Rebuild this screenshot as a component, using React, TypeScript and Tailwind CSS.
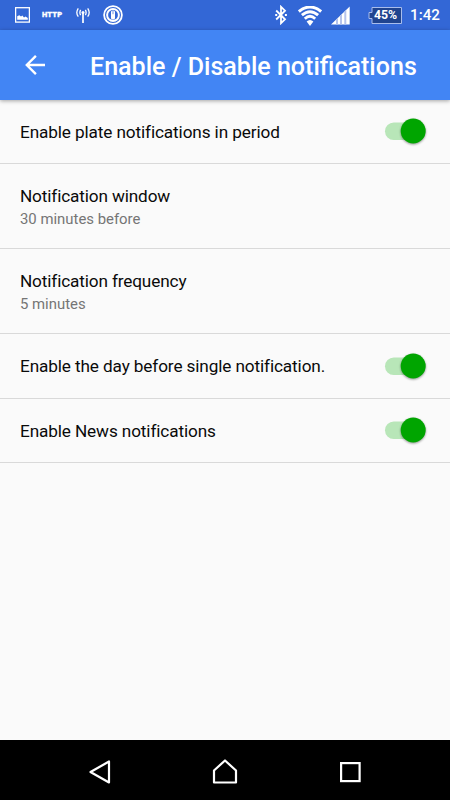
import React from "react";

function StatusBar() {
  return (
    <div className="flex h-[30px] shrink-0 items-center bg-[#3367d6] text-white">
      <svg className="ml-[15px] h-[16px] w-[15px]" viewBox="0 0 15 16">
        <rect x="0.6" y="0.7" width="13.8" height="14.4" fill="none" stroke="#fff" strokeWidth="1.3" />
        <path d="M2.2 12.8V9.3L4.3 8.2 6 9.4 7.3 8.4 9 10.4 10.5 9.5 12.8 11V12.8Z" fill="#fff" />
      </svg>
      <span className="ml-[12px] w-[21px] whitespace-nowrap text-[7.5px] font-black leading-none tracking-[0.2px] [-webkit-text-stroke:0.3px_#fff]">HTTP</span>
      <svg className="ml-[13px] h-[17px] w-[14px]" viewBox="0 0 14 17" fill="none" stroke="#fff">
        <path d="M7 5.5V16" strokeWidth="1.7" />
        <circle cx="7" cy="5.5" r="1.5" fill="#fff" stroke="none" />
        <path d="M4.6 2.9Q3.2 5.5 4.6 8.1M9.4 2.9Q10.8 5.5 9.4 8.1M2.3 1.3Q-0.7 5.5 2.3 9.7M11.7 1.3Q14.7 5.5 11.7 9.7" strokeWidth="1.3" />
      </svg>
      <svg className="ml-[13px] h-[20px] w-[20px]" viewBox="0 0 20 20">
        <circle cx="10" cy="10" r="8.9" fill="none" stroke="#fff" strokeWidth="1.8" />
        <circle cx="10" cy="10" r="6.9" fill="#fff" />
        <circle cx="10" cy="10" r="4.9" fill="#3367d6" />
        <rect x="8" y="5.5" width="4" height="9" rx="1.5" fill="#fff" />
        <path d="M10 5.5V9.2" stroke="#3367d6" strokeWidth="0.7" />
      </svg>
      <svg className="ml-[152px] h-[20px] w-[12px]" viewBox="0 0 12 20" fill="none" stroke="#fff">
        <path d="M1.2 5.5L10 14.3 6 18.2V1.8L10 5.7 1.2 14.5" strokeWidth="1.8" />
        <path d="M0.2 10H2.2M9.9 10H11.9" strokeWidth="1.9" />
      </svg>
      <svg className="ml-[11px] mt-[2px] h-[20px] w-[24px]" viewBox="0 0 24 20" fill="none" stroke="#fff">
        <path d="M0.9 5.5Q12 -3.4 23.1 5.5" strokeWidth="3" />
        <path d="M3.9 9.2Q12 2.2 20.1 9.2" strokeWidth="2.9" />
        <path d="M6.8 12.7Q12 7.8 17.2 12.7" strokeWidth="2.8" />
        <path d="M8.6 15.6Q12 12.6 15.4 15.6L12 20Z" fill="#fff" stroke="none" />
      </svg>
      <svg className="ml-[9px] h-[19px] w-[20px]" viewBox="0 0 20 19">
        <path d="M0 18.5L18.7 0.5V18.5Z" fill="#fff" />
        <path d="M5 18.5V13.7L7 11.8V18.5ZM9 18.5V9.8L11 7.9V18.5ZM13.3 18.5V5.7L15.3 3.8V18.5Z" fill="#b5c3ec" />
      </svg>
      <div className="relative ml-[17px] flex h-[17px] w-[34px]">
        <svg className="h-[17px] w-[34px]" viewBox="0 0 34 17">
          <path d="M4 0.5H33.5V16.5H4V11.5H1V5.5H4Z" fill="#20448f" stroke="#a9bdec" strokeWidth="1" />
        </svg>
        <span className="absolute left-[6px] top-[1px] text-[12.3px] font-bold leading-[15px]">45%</span>
      </div>
      <span className="ml-[8px] whitespace-nowrap pt-[2px] text-[15.2px] font-medium leading-none">1:42</span>
    </div>
  );
}

function Toggle() {
  return (
    <svg className="mb-[1px] mr-[20px] h-[34px] w-[48px] overflow-visible" viewBox="0 0 48 34" role="switch" aria-checked="true">
      <rect x="3" y="8.5" width="38" height="17.5" rx="8.75" fill="#b8e6b8" />
      <circle cx="31.2" cy="17" r="12.5" fill="#00a500" className="drop-shadow-[0_1.5px_1px_rgba(0,0,0,0.4)]" />
    </svg>
  );
}

function SwitchRow({ label, size }: { label: string; size: string }) {
  return (
    <div className={`flex items-center justify-between border-b border-[#d9d9d9] pl-5 ${size}`}>
      <span className="whitespace-nowrap text-[17.2px] leading-6 tracking-[-0.12px]">{label}</span>
      <Toggle />
    </div>
  );
}

function ValueRow({ label, value }: { label: string; value: string }) {
  return (
    <div className="flex h-[85px] flex-col justify-center border-b border-[#d9d9d9] pl-5 pt-[2px]">
      <span className="text-[17.2px] leading-6 tracking-[-0.14px]">{label}</span>
      <span className="text-[14.9px] leading-[23px] text-[#757575]">{value}</span>
    </div>
  );
}

export default function App() {
  return (
    <div className="flex h-[800px] w-[450px] flex-col overflow-hidden bg-[#fafafa] font-['Roboto',sans-serif] text-[#0a0a0a]">
      <StatusBar />
      <header className="z-10 flex h-[70px] shrink-0 items-center bg-[#4285f4] text-white shadow-[0_1px_4px_rgba(0,0,0,0.35)]">
        <svg className="ml-[25px] h-[20px] w-[20px]" viewBox="0 0 20 20" fill="none" stroke="#fff" strokeWidth="2.4">
          <path d="M20 10H2M10.9 0.9L1.8 10L10.9 19.1" />
        </svg>
        <h1 className="ml-[45px] whitespace-nowrap pt-[4px] text-[25.05px] font-medium leading-8">Enable / Disable notifications</h1>
      </header>
      <main className="flex-1">
        <SwitchRow label="Enable plate notifications in period" size="h-[64px]" />
        <ValueRow label="Notification window" value="30 minutes before" />
        <ValueRow label="Notification frequency" value="5 minutes" />
        <SwitchRow label="Enable the day before single notification." size="h-[65px]" />
        <SwitchRow label="Enable News notifications" size="h-[64px]" />
      </main>
      <nav className="flex h-[60px] shrink-0 items-center justify-between bg-black pl-[88px] pr-[88px] pt-[3px]">
        <svg className="h-[26px] w-[24px]" viewBox="0 0 24 26" fill="none" stroke="#fff" strokeWidth="2.2">
          <path d="M21 2.5V23.5L2.5 13Z" strokeLinejoin="round" />
        </svg>
        <svg className="h-[26px] w-[26px]" viewBox="0 0 26 26" fill="none" stroke="#fff" strokeWidth="2.2">
          <path d="M2 23.5V11.5L13 1.5L24 11.5V23.5Z" strokeLinejoin="round" />
        </svg>
        <svg className="h-[24px] w-[24px]" viewBox="0 0 24 24" fill="none" stroke="#fff" strokeWidth="2.2">
          <rect x="3.1" y="3.1" width="18.5" height="18" />
        </svg>
      </nav>
    </div>
  );
}
